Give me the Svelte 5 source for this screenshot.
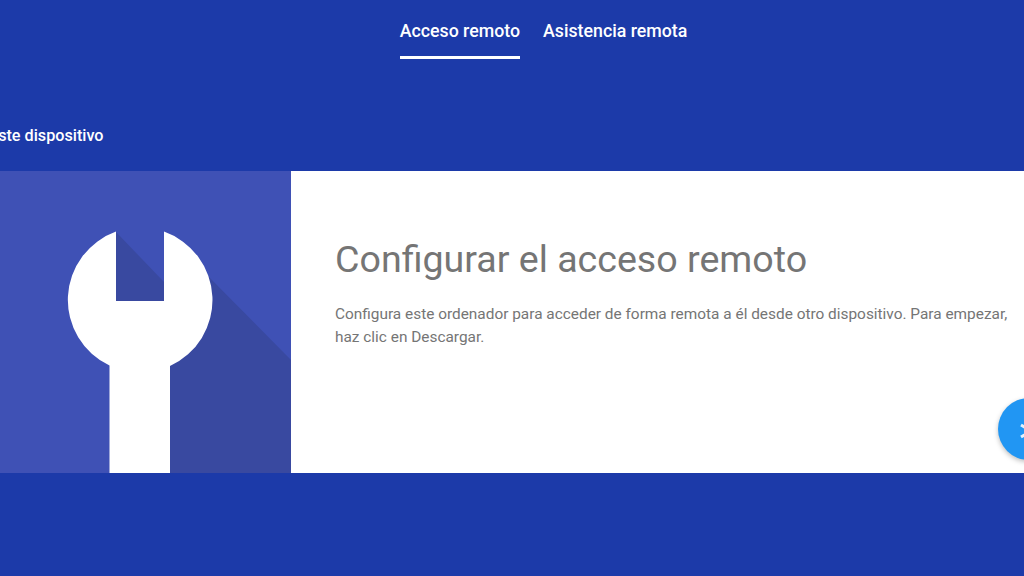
<script>
	const tabs = [
		{ label: 'Acceso remoto', active: true },
		{ label: 'Asistencia remota', active: false }
	];
</script>

<div class="page">
	<nav class="tabs">
		{#each tabs as tab}
			<a class="tab" class:active={tab.active} href="#top">{tab.label}</a>
		{/each}
	</nav>

	<h2 class="section-title">Este dispositivo</h2>

	<section class="card">
		<div class="banner">
			<svg viewBox="0 0 290 302" width="290" height="302" aria-hidden="true">
				<!-- long shadow -->
				<path d="M200 98 L290 189 V302 H169 V150 Z" fill="#3949a0" />
				<path d="M115 61 L163 111 V130 H115 Z" fill="#3949a0" />
				<path
					d="M115 60.6 V130 H163 V60.6 A72.5 72.5 0 0 1 169 195 V302 H108.5 V194.5 A72.5 72.5 0 0 1 115 60.6 Z"
					fill="#fff"
				/>
			</svg>
		</div>
		<div class="body">
			<h1>Configurar el acceso remoto</h1>
			<p>
				Configura este ordenador para acceder de forma remota a él desde otro dispositivo. Para
				empezar, haz clic en Descargar.
			</p>
		</div>
		<button class="fab" aria-label="Descargar">
			<svg viewBox="0 0 24 24" width="24" height="24" aria-hidden="true">
				<path d="M4 8 L14 14 L4 20" fill="none" stroke="#e3f2fd" stroke-width="3" />
			</svg>
		</button>
	</section>
</div>

<style>
	:global(body) {
		margin: 0;
		background: #1c3aa9;
		overflow: hidden;
	}

	.page {
		width: 1024px;
		height: 576px;
		overflow: hidden;
		font-family: Roboto, 'Liberation Sans', sans-serif;
		background: #1c3aa9;
	}

	.tabs {
		display: flex;
		justify-content: center;
		gap: 23px;
		height: 59px;
		padding-left: 63px;
	}

	.tab {
		box-sizing: border-box;
		height: 59px;
		padding-top: 21px;
		color: #fff;
		font-size: 17.75px;
		font-weight: 500;
		line-height: 20px;
		text-decoration: none;
	}

	.tab.active {
		border-bottom: 3px solid #fff;
	}

	.section-title {
		margin: 68px 0 0 -11px;
		height: 44px;
		color: #fff;
		font-size: 16.2px;
		font-weight: 500;
		line-height: 18px;
	}

	.card {
		position: relative;
		display: flex;
		width: 1024px;
		height: 302px;
		background: #fff;
	}

	.banner {
		flex: 0 0 290.5px;
		height: 302px;
		background: #3f51b5;
	}

	.banner svg {
		display: block;
		margin-left: 0.5px;
	}

	.body {
		flex: none;
		width: 733px;
		padding: 66px 0 0 44.5px;
		box-sizing: border-box;
		color: #757575;
	}

	h1 {
		margin: 0;
		font-size: 37.6px;
		font-weight: 400;
		line-height: 44px;
		color: #757575;
	}

	p {
		margin: 22px 0 0;
		font-size: 15.4px;
		line-height: 23px;
	}

	.fab {
		position: absolute;
		left: 998px;
		top: 227px;
		display: flex;
		align-items: center;
		justify-content: center;
		width: 62px;
		height: 62px;
		padding: 0;
		border: none;
		border-radius: 50%;
		background: #2196f3;
		box-shadow: 0 2px 5px rgba(0, 0, 0, 0.26);
	}
</style>
